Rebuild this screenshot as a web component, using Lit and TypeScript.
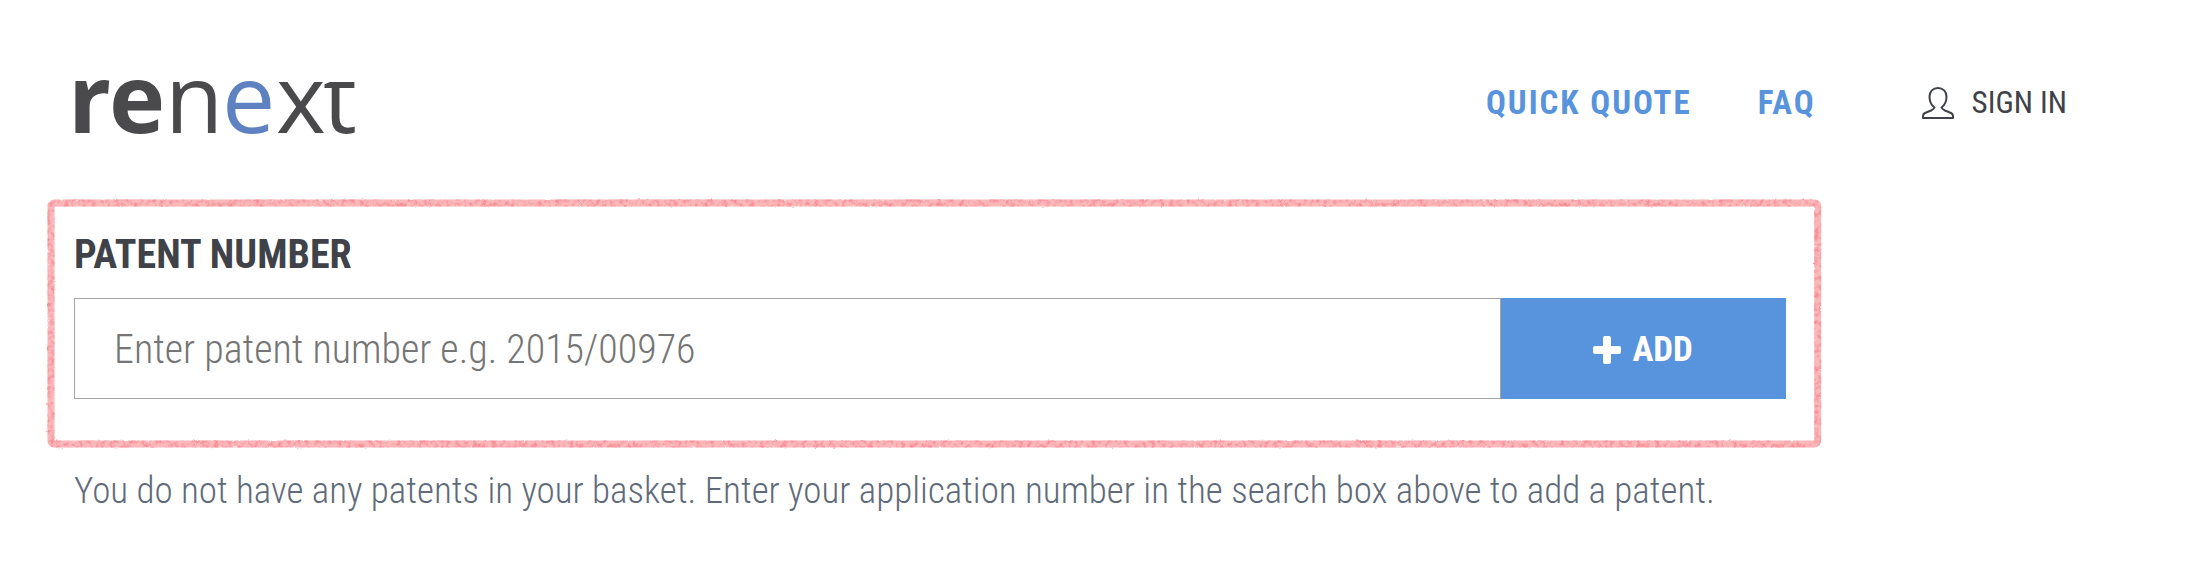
import { LitElement, html, css } from "lit";
import { customElement } from "lit/decorators.js";

@customElement("app-root")
export class AppRoot extends LitElement {
  static styles = css`
    :host {
      display: block;
      box-sizing: border-box;
      padding: 29px 120px 24px 48px;
      background: #fff;
      color: #3f4349;
      font-family: "Roboto Condensed", Roboto, sans-serif;
    }
    * { box-sizing: border-box; }
    .header {
      display: flex;
      align-items: center;
      justify-content: space-between;
      padding-left: 20px;
    }
    .logo { display: block; }
    .logo svg { display: block; overflow: visible; }
    .mark { font-family: "Open Sans", "Noto Sans", sans-serif; font-size: 95px; fill: #4a4a4c; }
    .heavy { font-weight: 700; }
    .accent { fill: #5e82c1; }
    .nav { display: flex; align-items: center; padding-top: 16px; }
    .link {
      color: #5893dd;
      font-size: 33px;
      line-height: 40px;
      font-weight: 700;
      letter-spacing: 2px;
      text-decoration: none;
      margin-right: 66px;
    }
    .signin {
      display: flex;
      align-items: center;
      gap: 18px;
      margin-left: 40px;
      color: #3f4349;
      font-size: 31px;
      line-height: 40px;
      text-decoration: none;
    }
    .main { width: 87.8%; }
    .panel {
      position: relative;
      margin: 38px 0 0;
      padding: 32px 35px 48px 26px;
    }
    .marker {
      position: absolute;
      inset: 4px 3px 3px 3px;
      width: calc(100% - 6px);
      height: calc(100% - 7px);
      overflow: visible;
      pointer-events: none;
    }
    .label {
      display: block;
      font-size: 40px;
      line-height: 48px;
      font-weight: 700;
      margin-bottom: 19px;
    }
    .row { display: flex; height: 101px; }
    .field {
      flex: 1;
      min-width: 0;
      border: 1px solid #a5a5a5;
      border-radius: 0;
      padding: 2px 39px 0;
      background: #fff;
      color: #3f4349;
      font: 300 40px "Roboto Condensed", Roboto, sans-serif;
    }
    .field::placeholder { color: #757575; opacity: 1; }
    .add {
      width: 285px;
      border: 0;
      display: flex;
      align-items: center;
      justify-content: center;
      gap: 11px;
      padding: 2px 0 0;
      background: #5893dd;
      color: #fff;
      font: 700 35px "Roboto Condensed", Roboto, sans-serif;
    }
    .note {
      margin: 20px 0 0 26px;
      color: #5f6b7a;
      font-size: 37px;
      line-height: 48px;
      font-weight: 300;
    }
  `;

  render() {
    return html`
      <header class="header">
        <a class="logo" href="#" aria-label="renext">
          <svg width="300" height="132" viewBox="0 0 300 132">
            <clipPath id="flat-top"><rect x="240" y="53" width="60" height="60" /></clipPath>
            <text class="mark" y="104">
              <tspan class="heavy" x="0">r</tspan><tspan class="heavy" x="41">e</tspan><tspan x="97">n</tspan><tspan class="accent" x="154">e</tspan><tspan x="208">x</tspan>
            </text>
            <text class="mark" x="255" y="104" clip-path="url(#flat-top)">t</text>
          </svg>
        </a>
        <nav class="nav">
          <a class="link" href="#quote">QUICK QUOTE</a>
          <a class="link" href="#faq">FAQ</a>
          <a class="signin" href="#signin">
            <svg width="32" height="32" viewBox="0 0 32 32" fill="none" stroke="#3f4349" stroke-width="2" stroke-linejoin="round">
              <path d="M12.5 20.5C9 18 7.5 14 7.5 9.500C7.500 4.500 11 1 16 1S24.500 4.500 24.500 9.500C24.500 14 23 18 19.500 20.500C20 22 21 22.500 23 23.500L29 26Q31 27 31 29V31H1V29Q1 27 3 26L9 23.500C11 22.500 12 22 12.500 20.500Z" />
            </svg>
            SIGN IN
          </a>
        </nav>
      </header>
      <main class="main">
        <form class="panel" @submit=${(e: Event) => e.preventDefault()}>
          <svg class="marker" aria-hidden="true">
            <filter id="crayon" x="-1%" y="-4%" width="102%" height="108%" color-interpolation-filters="sRGB">
              <feTurbulence type="fractalNoise" baseFrequency="0.22" numOctaves="3" seed="4" result="n" />
              <feColorMatrix in="n" type="matrix" values="0 0 0 0 0.96  0 0 0 0 0.56  0 0 0 0 0.59  3 0 0 0 -1.3" result="tint" />
              <feDisplacementMap in="SourceGraphic" in2="n" scale="2" xChannelSelector="R" yChannelSelector="G" result="rough" />
              <feComposite in="tint" in2="rough" operator="in" result="grain" />
              <feMerge><feMergeNode in="rough" /><feMergeNode in="grain" /></feMerge>
            </filter>
            <rect width="100%" height="100%" rx="3" fill="none" stroke="#fbb8bb" stroke-width="7" filter="url(#crayon)" />
          </svg>
          <label class="label" for="patent">PATENT NUMBER</label>
          <div class="row">
            <input class="field" id="patent" type="text" placeholder="Enter patent number e.g. 2015/00976" />
            <button class="add" type="submit">
              <svg width="28" height="28" viewBox="0 0 28 28" fill="#fff" aria-hidden="true">
                <path d="M12 0h4q2 0 2 2v8h8q2 0 2 2v4q0 2-2 2h-8v8q0 2-2 2h-4q-2 0-2-2v-8H2q-2 0-2-2v-4q0-2 2-2h8V2q0-2 2-2Z" />
              </svg>
              <span>ADD</span>
            </button>
          </div>
        </form>
        <p class="note">You do not have any patents in your basket. Enter your application number in the search box above to add a patent.</p>
      </main>
    `;
  }
}
